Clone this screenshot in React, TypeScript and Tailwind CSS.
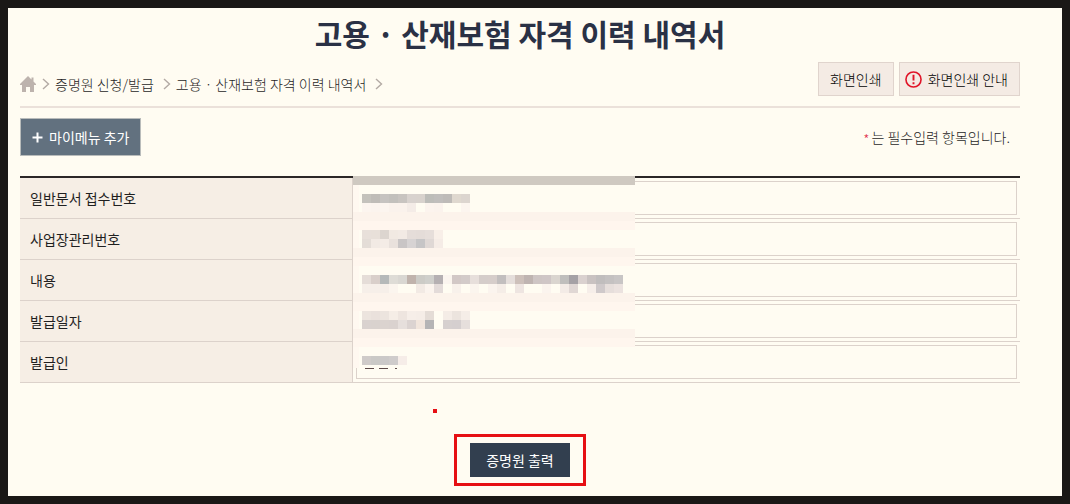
import React from 'react';

// Masked values: each row is [y, colours of 9px cells from left to right], '' leaves a cell empty
const MASK_ROWS: [number, string[]][] = [
  [18, ['#c4c2bc', '#bfbcb7', '#c6c3c0', '#c2c0bc', '#c8c4c0', '#d8d2ce', '#d8d2cd', '#bdbdb9', '#c0bebc', '#bebbb8', '#dfd8cf', '#dcd5cf']],
  [27, ['#fcf5ef', '#fbf4ee', '#fcf5ef', '#faf2ec', '#faf2ec', '#f4ece7', '', '#fcf4ee', '#fbf3ed', '', '', '#fcf5ef']],
  [54, ['#e8e0da', '#e8e0d9', '#dcd5cf', '#f1e9e2', '#f2eae4', '#e5ddd9', '#e4dcd8', '#e6deda', '#f8efe8']],
  [63, ['#e4ddd7', '#f2eae4', '#f4ece6', '#e9e1dc', '#c9c5c5', '#d7d3d3', '#c6c5c6', '#dfd8d5', '#f5ece6']],
  [99, ['#e5ddd8', '#d9cfca', '#b5b9b9', '#dedcd6', '#d9d7d2', '#c0b3ac', '#cccbc6', '#cfcfcb', '#b5b0b2', '#fbf5ef', '#d2c8c6', '#d3cbc9', '#e7dfdb', '#d5cdca', '#d6cdca', '#c2bebe', '#e5dedb', '#cdc0ba', '#bfb4b1', '#cec5c4', '#cfc6c6', '#dad5cf', '#bfbebc', '#a5a1a5', '#dad1cf', '#c9c2c1', '#c0bdbd', '#c4c1c1', '#c8c5c5']],
  [108, ['#f6efe9', '#f6efe9', '#f6efe9', '#fbf5ee', '', '', '#f2eae4', '#fbf4ee', '#e3dbd9', '', '#f8f1eb', '', '#fbf5ee', '', '#fbf4ee', '#f5ede7', '', '#eee5e1', '', '', '#fbf4ee', '', '#f3ebe6', '#e0d7d4', '', '#f6eee9', '#cfc9ca', '#e6dedb', '#ebe2df']],
  [135, ['#ece4de', '#eae1dc', '#ece4de', '#f5ede6', '#eee5df', '#f6eee8', '#f5ede7', '#e4dcd6', '', '#f4ece6', '#ece4de', '#f5ede7']],
  [144, ['#d9d2cf', '#d9d2ce', '#dbd3cf', '#dad2cf', '#e6dfdc', '#dbd3d1', '#f1e5dc', '#b5b4b5', '', '#d6d0cf', '#d5cfcf', '#e6dfdc']],
  [180, ['#cfcbc9', '#cac9c6', '#cbc9c8', '#cfcccb', '#f6ede8']],
];

const MASK_BANDS = [36, 72, 117, 153];

const Mask: React.FC = () => (
  <svg className="absolute left-[333px] top-0" width="282" height="193" aria-hidden="true" shapeRendering="crispEdges">
    <rect width="282" height="192" fill="#fffcf2" />
    <rect width="6" height="192" fill="#fff8f0" />
    <rect width="282" height="9" fill="#cfc9c1" />
    {MASK_BANDS.map((y) => (
      <g key={y}>
        <rect y={y} width="282" height="9" fill="#fcf3eb" />
        <rect y={y + 9} width="282" height="9" fill="#fff6ee" />
      </g>
    ))}
    {MASK_ROWS.map(([y, cells]) =>
      cells.map((fill, i) => fill && <rect key={`${y}-${i}`} x={9 + i * 9} y={y} width="9" height="9" fill={fill} />)
    )}
    <path d="M12 192h9v1h-9zM26 192h9v1h-9zM42 192h2v1h-2z" fill="#5c4a48" />
  </svg>
);

const Chevron: React.FC = () => (
  <svg className="shrink-0" width="8" height="12" viewBox="0 0 8 12" fill="none" stroke="#b3aaa4" strokeWidth="1.4" aria-hidden="true">
    <path d="M1 1l5.5 5L1 11" />
  </svg>
);

const FIELDS = [
  { id: 'docNo', label: '일반문서 접수번호' },
  { id: 'siteNo', label: '사업장관리번호' },
  { id: 'content', label: '내용' },
  { id: 'issuedAt', label: '발급일자' },
  { id: 'issuer', label: '발급인' },
];

const App: React.FC = () => {
  return (
    <div className="min-h-screen border-8 border-[#1a1816] bg-[#fffcf2] pl-3 pr-[42px] font-['Noto_Sans_CJK_KR',sans-serif] text-sm font-light text-[#1f1f1f]">
      <h1 className="pb-1 text-center text-[30px] leading-[50px] font-bold text-[#2a3145]">고용 · 산재보험 자격 이력 내역서</h1>

      <div className="flex items-start justify-between border-b-2 border-[#ebe1da]">
        <nav className="flex h-11 items-center" aria-label="breadcrumb">
          <a href="#home" aria-label="홈" className="mr-1.5">
            <svg width="16" height="16" viewBox="0 0 16 16" fill="#bdb3ad" aria-hidden="true">
              <path d="M8 0L0 8v1h2v7h4v-5h4v5h4V9h2V8l-2.5-2.5V1.5h-2v2z" />
            </svg>
          </a>
          <Chevron />
          <a href="#apply" className="mr-[9px] ml-[5px]">증명원 신청/발급</a>
          <Chevron />
          <a href="#history" className="mr-[9px] ml-[5px]">고용 · 산재보험 자격 이력 내역서</a>
          <Chevron />
        </nav>
        <div className="flex gap-[5px]">
          <button className="h-[34px] border border-[#e0d4cd] bg-[#f4ebe4] px-[11px] text-black">화면인쇄</button>
          <button className="flex h-[34px] items-center gap-1.5 border border-[#e0d4cd] bg-[#f4ebe4] pr-[11px] pl-[5px] text-black">
            <svg width="17" height="17" viewBox="0 0 16 16" fill="none" stroke="#e01428" aria-hidden="true">
              <circle cx="8" cy="8" r="7.1" strokeWidth="1.5" />
              <path d="M8 3.5v5.5M8 10.5v2" strokeWidth="1.8" />
            </svg>
            화면인쇄 안내
          </button>
        </div>
      </div>

      <div className="flex items-center justify-between pt-[10px]">
        <button className="flex h-[38px] items-center gap-1.5 border border-[#b9bcbb] bg-[#62717f] px-[11px] font-normal text-white">
          <svg width="11" height="11" viewBox="0 0 11 11" stroke="#fff" strokeWidth="2" aria-hidden="true">
            <path d="M5.5 .5v10M.5 5.5h10" />
          </svg>
          마이메뉴 추가
        </button>
        <p className="flex items-center gap-0.5 pr-[10px]">
          <span className="pt-1 text-[#e0304a]">*</span>
          <span>는 필수입력 항목입니다.</span>
        </p>
      </div>

      <div className="relative mt-5">
        <table className="w-full table-fixed border-separate border-spacing-0 border-t-2 border-[#2b2727]">
          <tbody>
            {FIELDS.map((f) => (
              <tr key={f.id}>
                <th scope="row" className="h-[41px] w-[333px] border-r border-b border-[#dcd2cb] bg-[#f6eee5] p-0 pl-[10px] text-left font-normal">
                  <label htmlFor={f.id}>{f.label}</label>
                </th>
                <td className="h-[41px] border-b border-[#dcd2cb] p-0 px-[3px]">
                  <input id={f.id} type="text" readOnly className="block h-[34px] w-full border border-[#dcd2cb] px-[5px]" />
                </td>
              </tr>
            ))}
          </tbody>
        </table>
        <Mask />
      </div>

      <div className="relative flex justify-center pt-[51px] pb-2">
        <span className="absolute top-[26px] left-[413px] size-1 bg-[#e60f14]" />
        <div className="border-[3px] border-[#e60f14] px-[13px] py-[6px]">
          <button className="block h-[34px] bg-[#323f4f] px-4 font-normal text-white">증명원 출력</button>
        </div>
      </div>
    </div>
  );
};

export default App;
